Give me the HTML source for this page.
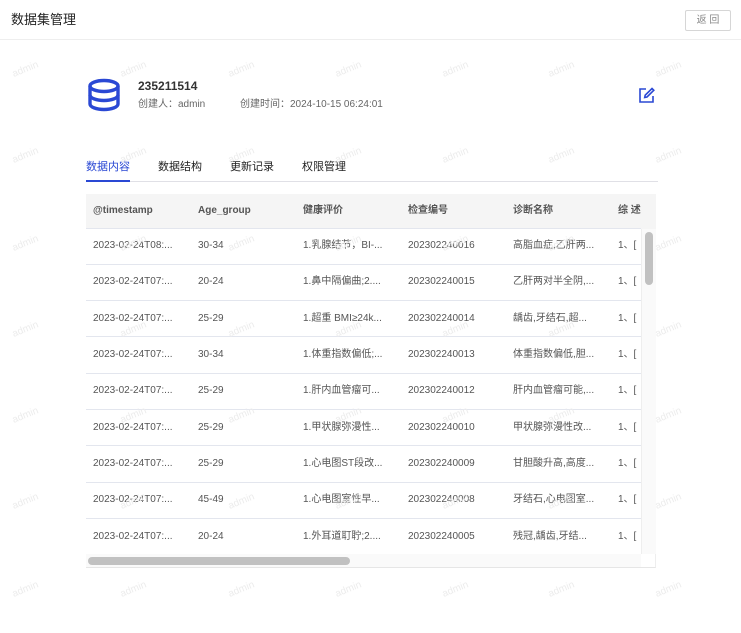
<!DOCTYPE html>
<html><head><meta charset="utf-8"><style>
*{margin:0;padding:0;box-sizing:border-box}
body{width:741px;height:633px;background:#fff;font-family:"Liberation Sans","Noto Sans CJK SC",sans-serif;position:relative;overflow:hidden;color:#333}
.wm{position:absolute;font-size:10px;line-height:12px;color:#ececec;transform:rotate(-22deg);z-index:5;pointer-events:none}
.hdr{position:absolute;left:0;top:0;width:741px;height:40px;border-bottom:1px solid #eee}
.hdr .t{position:absolute;left:11px;top:12px;font-size:13px;line-height:16px;color:#222}
.btn{position:absolute;left:685px;top:10px;width:46px;height:21px;border:1px solid #d6d6d6;border-radius:2px;font-size:10px;color:#888;text-align:center;line-height:19px}
.abs{position:absolute;line-height:14px}
.tabs span{position:absolute;top:160px;font-size:11px;line-height:14px;color:#222}
table{position:absolute;left:86px;top:194px;width:555px;border-collapse:collapse;font-size:10px;line-height:12px;color:#555;table-layout:fixed}
th{background:#f5f5f5;height:34px;text-align:left;font-weight:bold;color:#555;padding:0 0 0 7px;border-bottom:1px solid #e3e6ee;vertical-align:middle}
td{height:36.3px;padding:0 0 0 7px;border-bottom:1px solid #e3e6ee;white-space:nowrap;overflow:hidden;vertical-align:middle}
td span,th span{display:inline-block;line-height:12px;height:12px;vertical-align:middle}
</style></head><body>
<div class="hdr"><div class="t">数据集管理</div><div class="btn">返 回</div></div>

<svg class="abs" style="left:87px;top:78px" width="34" height="34" viewBox="0 0 34 34" fill="none" stroke="#2a48d4" stroke-width="3.4">
<ellipse cx="17" cy="8" rx="14" ry="5.5"/>
<path d="M3 8v9c0 3 6.3 5.5 14 5.5S31 20 31 17V8"/>
<path d="M3 17v9c0 3 6.3 5.5 14 5.5S31 29 31 26V17"/>
</svg>
<div class="abs" style="left:138px;top:79px;font-size:12px;font-weight:bold;color:#333">235211514</div>
<div class="abs" style="left:138px;top:98px;font-size:10px;color:#666">创建人：admin</div>
<div class="abs" style="left:240px;top:98px;font-size:10px;color:#666">创建时间：2024-10-15 06:24:01</div>
<svg class="abs" style="left:638px;top:87px" width="17" height="17" viewBox="0 0 17 17" fill="none" stroke="#2a48d4" stroke-width="1.6">
<path d="M8 2H2v13h13V9"/><path d="M14 1.5l1.8 1.8L9 10l-2.3.5.5-2.3z"/>
</svg>

<div class="tabs">
<span style="left:86px;color:#2a48d4">数据内容</span>
<span style="left:158px">数据结构</span>
<span style="left:230px">更新记录</span>
<span style="left:302px">权限管理</span>
</div>
<div class="abs" style="left:86px;top:181px;width:572px;height:1px;background:#e0e0e6"></div>
<div class="abs" style="left:86px;top:180px;width:44px;height:2px;background:#2a48d4"></div>

<div class="abs" style="left:86px;top:194px;width:570px;height:374px;border-bottom:1px solid #e6e6e6;border-right:1px solid #eee"></div>
<div class="abs" style="left:641px;top:194px;width:15px;height:35px;background:#f5f5f5"></div>
<table>
<colgroup><col style="width:105px"><col style="width:105px"><col style="width:105px"><col style="width:105px"><col style="width:105px"><col style="width:30px"></colgroup>
<tr><th>@timestamp</th><th>Age_group</th><th>健康评价</th><th>检查编号</th><th>诊断名称</th><th>综 述</th></tr>
<tr><td>2023-02-24T08:...</td><td>30-34</td><td>1.乳腺结节，BI-...</td><td>202302240016</td><td>高脂血症,乙肝两...</td><td>1、[</td></tr>
<tr><td>2023-02-24T07:...</td><td>20-24</td><td>1.鼻中隔偏曲;2....</td><td>202302240015</td><td>乙肝两对半全阴,...</td><td>1、[</td></tr>
<tr><td>2023-02-24T07:...</td><td>25-29</td><td>1.超重 BMI≥24k...</td><td>202302240014</td><td>龋齿,牙结石,超...</td><td>1、[</td></tr>
<tr><td>2023-02-24T07:...</td><td>30-34</td><td>1.体重指数偏低;...</td><td>202302240013</td><td>体重指数偏低,胆...</td><td>1、[</td></tr>
<tr><td>2023-02-24T07:...</td><td>25-29</td><td>1.肝内血管瘤可...</td><td>202302240012</td><td>肝内血管瘤可能,...</td><td>1、[</td></tr>
<tr><td>2023-02-24T07:...</td><td>25-29</td><td>1.甲状腺弥漫性...</td><td>202302240010</td><td>甲状腺弥漫性改...</td><td>1、[</td></tr>
<tr><td>2023-02-24T07:...</td><td>25-29</td><td>1.心电图ST段改...</td><td>202302240009</td><td>甘胆酸升高,高度...</td><td>1、[</td></tr>
<tr><td>2023-02-24T07:...</td><td>45-49</td><td>1.心电图室性早...</td><td>202302240008</td><td>牙结石,心电图室...</td><td>1、[</td></tr>
<tr><td>2023-02-24T07:...</td><td>20-24</td><td>1.外耳道耵聍;2....</td><td>202302240005</td><td>残冠,龋齿,牙结...</td><td>1、[</td></tr>
</table>
<div class="abs" style="left:641px;top:229px;width:15px;height:325px;background:#fafafa;border-left:1px solid #eee"></div>
<div class="abs" style="left:645px;top:232px;width:8px;height:53px;background:#c1c1c1;border-radius:4px"></div>
<div class="abs" style="left:86px;top:554px;width:555px;height:13px;background:#fafafa"></div>
<div class="abs" style="left:88px;top:557px;width:262px;height:8px;background:#c1c1c1;border-radius:4px"></div>

<div class="wm" style="left:12px;top:64px">admin</div><div class="wm" style="left:120px;top:64px">admin</div><div class="wm" style="left:228px;top:64px">admin</div><div class="wm" style="left:335px;top:64px">admin</div><div class="wm" style="left:442px;top:64px">admin</div><div class="wm" style="left:548px;top:64px">admin</div><div class="wm" style="left:655px;top:64px">admin</div>
<div class="wm" style="left:12px;top:150px">admin</div><div class="wm" style="left:120px;top:150px">admin</div><div class="wm" style="left:228px;top:150px">admin</div><div class="wm" style="left:335px;top:150px">admin</div><div class="wm" style="left:442px;top:150px">admin</div><div class="wm" style="left:548px;top:150px">admin</div><div class="wm" style="left:655px;top:150px">admin</div>
<div class="wm" style="left:12px;top:238px">admin</div><div class="wm" style="left:120px;top:238px">admin</div><div class="wm" style="left:228px;top:238px">admin</div><div class="wm" style="left:335px;top:238px">admin</div><div class="wm" style="left:442px;top:238px">admin</div><div class="wm" style="left:548px;top:238px">admin</div><div class="wm" style="left:655px;top:238px">admin</div>
<div class="wm" style="left:12px;top:324px">admin</div><div class="wm" style="left:120px;top:324px">admin</div><div class="wm" style="left:228px;top:324px">admin</div><div class="wm" style="left:335px;top:324px">admin</div><div class="wm" style="left:442px;top:324px">admin</div><div class="wm" style="left:548px;top:324px">admin</div><div class="wm" style="left:655px;top:324px">admin</div>
<div class="wm" style="left:12px;top:410px">admin</div><div class="wm" style="left:120px;top:410px">admin</div><div class="wm" style="left:228px;top:410px">admin</div><div class="wm" style="left:335px;top:410px">admin</div><div class="wm" style="left:442px;top:410px">admin</div><div class="wm" style="left:548px;top:410px">admin</div><div class="wm" style="left:655px;top:410px">admin</div>
<div class="wm" style="left:12px;top:496px">admin</div><div class="wm" style="left:120px;top:496px">admin</div><div class="wm" style="left:228px;top:496px">admin</div><div class="wm" style="left:335px;top:496px">admin</div><div class="wm" style="left:442px;top:496px">admin</div><div class="wm" style="left:548px;top:496px">admin</div><div class="wm" style="left:655px;top:496px">admin</div>
<div class="wm" style="left:12px;top:584px">admin</div><div class="wm" style="left:120px;top:584px">admin</div><div class="wm" style="left:228px;top:584px">admin</div><div class="wm" style="left:335px;top:584px">admin</div><div class="wm" style="left:442px;top:584px">admin</div><div class="wm" style="left:548px;top:584px">admin</div><div class="wm" style="left:655px;top:584px">admin</div>
</body></html>
